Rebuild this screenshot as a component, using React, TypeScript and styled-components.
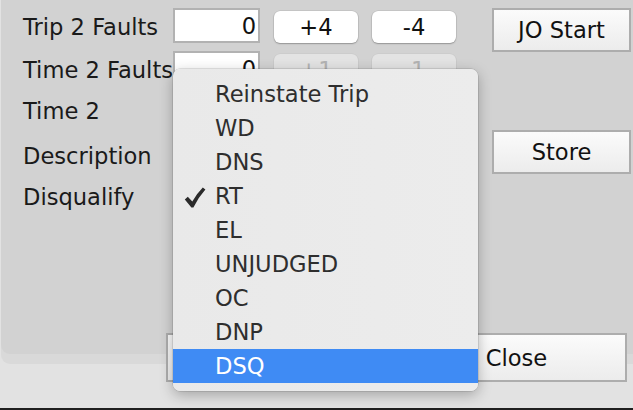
import React from "react";
import styled, { createGlobalStyle, css } from "styled-components";

const Global = createGlobalStyle`
  html, body { margin: 0; padding: 0; background: #e2e2e2; }
  body { font-family: "DejaVu Sans", "Liberation Sans", sans-serif; }
  * { box-sizing: border-box; }
`;

const Root = styled.div`
  position: relative;
  width: 633px;
  height: 410px;
  overflow: hidden;
  background: #e2e2e2;
  border-bottom: 2px solid #1f1f1f;
  font-size: 22.6px;
  color: #1a1a1a;
`;

const PanelOuter = styled.div`
  margin-left: 1px;
  height: 364px;
  background: #d9d9d9;
  border-bottom-left-radius: 9px;
`;

const PanelInner = styled.div`
  height: 354px;
  background: #d2d2d2;
  border-bottom-left-radius: 9px;
  display: flex;
  padding: 0 1px 0 22px;
`;

const FormCol = styled.div`
  display: flex;
  flex-direction: column;
`;

const Row = styled.div<{ $mt: number }>`
  display: flex;
  align-items: center;
  height: 35px;
  margin-top: ${(p) => p.$mt}px;
`;

const Label = styled.div`
  width: 150px;
  flex: none;
  white-space: nowrap;
  line-height: 26px;
  padding-top: 2px;
`;

const Field = styled.div<{ $w?: number }>`
  width: ${(p) => p.$w ?? 87}px;
  height: 35px;
  flex: none;
  background: #fff;
  border: 2px solid #b2b2b2;
  display: flex;
  align-items: center;
  justify-content: flex-end;
  padding-right: 2px;
  color: #111;
  line-height: 26px;
`;

const StepButton = styled.div<{ $disabled?: boolean }>`
  width: 84px;
  height: 32px;
  flex: none;
  align-self: flex-end;
  margin-left: 14px;
  border-radius: 6px;
  background: #fff;
  box-shadow: 0 0 0 0.5px rgba(0, 0, 0, 0.12), 0 1px 1.5px rgba(0, 0, 0, 0.25);
  display: flex;
  align-items: center;
  justify-content: center;
  line-height: 26px;
  color: #111;
  ${(p) =>
    p.$disabled &&
    css`
      background: #e3e3e3;
      color: #b3b3b3;
      box-shadow: 0 0 0 0.5px rgba(0, 0, 0, 0.06), 0 1px 1px rgba(0, 0, 0, 0.1);
    `}
`;

const RightCol = styled.div`
  display: flex;
  flex-direction: column;
  margin-left: 36px;
  padding-top: 8px;
`;

const SquareButton = styled.div<{ $w?: number; $h?: number; $mt?: number }>`
  width: ${(p) => p.$w ?? 139}px;
  height: ${(p) => p.$h ?? 44}px;
  margin-top: ${(p) => p.$mt ?? 0}px;
  flex: none;
  border: 2px solid #adadad;
  background: linear-gradient(to bottom, #fbfbfb, #ececec);
  display: flex;
  align-items: center;
  justify-content: center;
  line-height: 26px;
  color: #111;
`;

const ButtonBar = styled.div`
  display: flex;
  gap: 5px;
  margin-top: -31px;
  padding-left: 166px;
`;

const Menu = styled.div`
  position: absolute;
  left: 173px;
  top: 69px;
  width: 305px;
  padding: 8px 0;
  background: linear-gradient(to right, #e9e9e9, #ececec);
  border-radius: 7px;
  box-shadow: 0 0 0 0.5px rgba(0, 0, 0, 0.18), 0 4px 14px rgba(0, 0, 0, 0.28);
  overflow: hidden;
`;

const MenuItem = styled.div<{ $active?: boolean }>`
  height: 34px;
  display: flex;
  align-items: center;
  padding-left: 11px;
  color: ${(p) => (p.$active ? "#ffffff" : "#2e2e2e")};
  background: ${(p) => (p.$active ? "#3f8bf4" : "transparent")};
  line-height: 26px;
  white-space: nowrap;
`;

const CheckSlot = styled.div`
  width: 31px;
  flex: none;
  display: flex;
  align-items: center;
  padding-top: 2px;
`;

const Check = () => (
  <svg width="22" height="21" viewBox="0 0 22 21">
    <path
      d="M0.8 12.4 L3.8 9.8 L8.3 14.4 Q13 6.5 18.8 0.6 L21.4 2.4 Q14.5 10 9.4 20.4 L7.4 20.4 Z"
      fill="#2a2a2a"
    />
  </svg>
);

const items = [
  "Reinstate Trip",
  "WD",
  "DNS",
  "RT",
  "EL",
  "UNJUDGED",
  "OC",
  "DNP",
  "DSQ",
];

export default function App() {
  return (
    <>
      <Global />
      <Root>
        <PanelOuter>
          <PanelInner>
            <FormCol>
              <Row $mt={8}>
                <Label>Trip 2 Faults</Label>
                <Field>0</Field>
                <StepButton>+4</StepButton>
                <StepButton>-4</StepButton>
              </Row>
              <Row $mt={8}>
                <Label>Time 2 Faults</Label>
                <Field>0</Field>
                <StepButton $disabled>+1</StepButton>
                <StepButton $disabled>-1</StepButton>
              </Row>
              <Row $mt={6}>
                <Label>Time 2</Label>
                <Field />
              </Row>
              <Row $mt={10}>
                <Label>Description</Label>
                <Field $w={280} />
              </Row>
              <Row $mt={6}>
                <Label>Disqualify</Label>
                <Field $w={200} />
              </Row>
            </FormCol>
            <RightCol>
              <SquareButton>JO Start</SquareButton>
              <SquareButton $mt={78}>Store</SquareButton>
            </RightCol>
          </PanelInner>
        </PanelOuter>
        <ButtonBar>
          <SquareButton $w={235} $h={49} />
          <SquareButton $w={221} $h={49}>Close</SquareButton>
        </ButtonBar>
        <Menu>
          {items.map((it) => (
            <MenuItem key={it} $active={it === "DSQ"}>
              <CheckSlot>{it === "RT" ? <Check /> : null}</CheckSlot>
              {it}
            </MenuItem>
          ))}
        </Menu>
      </Root>
    </>
  );
}
